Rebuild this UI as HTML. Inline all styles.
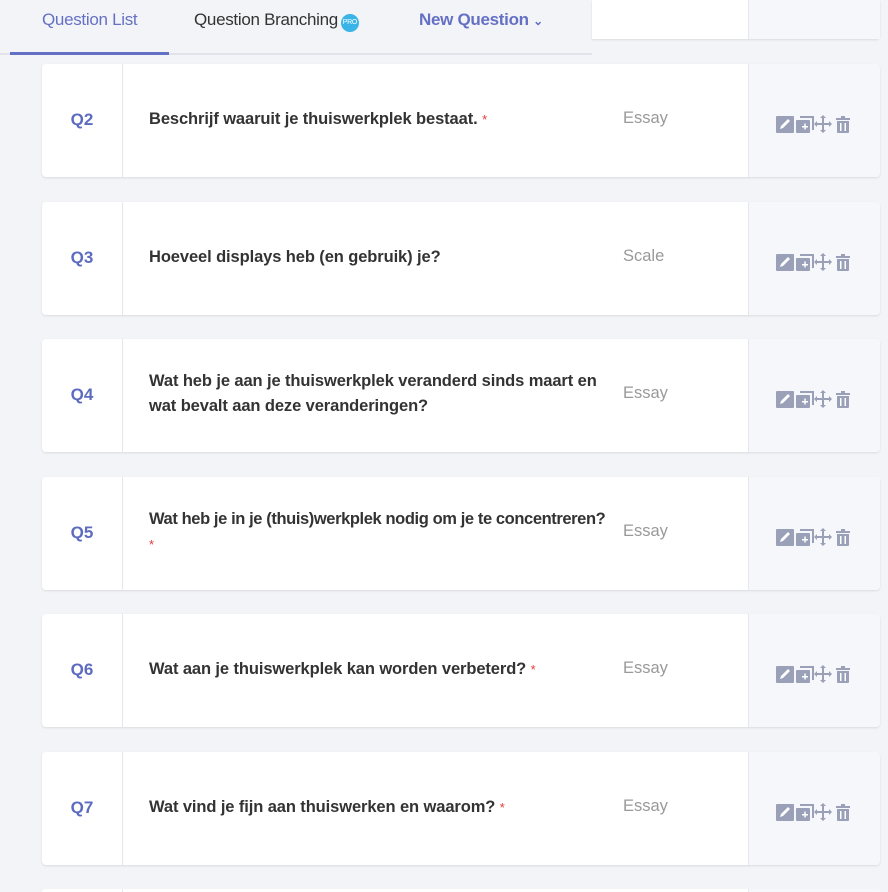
<!DOCTYPE html>
<html><head><meta charset="utf-8"><style>
*{margin:0;padding:0;box-sizing:border-box}
html,body{width:888px;height:892px;overflow:hidden}
body{background:#f3f4f8;font-family:"Liberation Sans",sans-serif;position:relative}
.tabs{position:absolute;left:0;top:0;width:592px;height:55px;border-bottom:2px solid #e2e3ea}
.tab{position:absolute;top:10px;font-size:17px;color:#333;letter-spacing:-0.3px}
.ul{position:absolute;left:10px;top:52px;width:159px;height:3px;background:#6470c4}
.topcard{position:absolute;left:592px;top:0;width:288px;height:39px;background:#fff;border-radius:0 0 4px 0;box-shadow:0 1px 2px rgba(0,0,0,.1)}
.topcard .a{position:absolute;left:156px;top:0;bottom:0;width:132px;background:#f6f7fb;border-left:1px solid #e6e7ee}
.card{position:absolute;left:42px;width:838px;height:113px;background:#fff;border-radius:4px;box-shadow:0 1px 2px rgba(0,0,0,.1);overflow:hidden}
.q{position:absolute;left:0;top:0;width:81px;height:113px;border-right:1px solid #e6e7ee;color:#5c6bc0;font-weight:bold;font-size:17px;text-align:center;line-height:111px}
.t{position:absolute;left:107px;width:482px;font-weight:bold;font-size:16.5px;color:#333;line-height:25px;letter-spacing:-0.1px}
.s{color:#e53935;font-size:13px;font-weight:normal;vertical-align:top}
.ty{position:absolute;left:581px;top:45px;color:#999;font-size:16.5px}
.act{position:absolute;left:706px;top:0;width:132px;height:113px;background:#f6f7fb;border-left:1px solid #e6e7ee}
.act svg{position:absolute;left:26px;top:50px}
</style></head><body>
<div class="tabs">
<div class="tab" style="left:42px;color:#6470c4">Question List</div>
<div class="tab" style="left:194px">Question Branching<span style="display:inline-block;width:18px;height:18px;border-radius:50%;background:#3ab4e6;color:#fff;font-size:7px;line-height:18px;text-align:center;vertical-align:1px;margin-left:3px">PRO</span></div>
<div class="tab" style="left:419px;color:#6470c4;font-weight:bold">New Question <span style="font-size:12px">&#8964;</span></div>
<div class="ul"></div>
</div>
<div class="topcard"><div class="a"></div></div>

<div class="card" style="top:64px"><div class="q">Q2</div><div class="t" style="top:43px">Beschrijf waaruit je thuiswerkplek bestaat. <span class="s">*</span></div><div class="ty">Essay</div><div class="act"><svg width="80" height="20" viewBox="0 0 80 20" fill="#9aa0b8"><rect x="1" y="2" width="18" height="17" rx="1"/><path d="M5 15l1-3 7-7 2 2-7 7z" fill="#fff"/><rect x="21" y="6" width="14" height="13" rx="1"/><path d="M25 2h14v14h-2V4H25z"/><path d="M27 12h6v1.5h-6zM29.3 9.5h1.5v6h-1.5z" fill="#fff"/><path d="M48 1l3 3h-2v5h5V7l3 3-3 3v-2h-5v5h2l-3 3-3-3h2v-5h-5v2l-3-3 3-3v2h5V4h-2z"/><path d="M61 4h5V2h4v2h5v2H61z"/><path d="M62 7h12v11a1 1 0 01-1 1H63a1 1 0 01-1-1z"/><path d="M65 9h1.5v8H65zM69.5 9H71v8h-1.5z" fill="#fff"/></svg></div></div>

<div class="card" style="top:202px"><div class="q">Q3</div><div class="t" style="top:43px">Hoeveel displays heb (en gebruik) je?</div><div class="ty">Scale</div><div class="act"><svg width="80" height="20" viewBox="0 0 80 20" fill="#9aa0b8"><rect x="1" y="2" width="18" height="17" rx="1"/><path d="M5 15l1-3 7-7 2 2-7 7z" fill="#fff"/><rect x="21" y="6" width="14" height="13" rx="1"/><path d="M25 2h14v14h-2V4H25z"/><path d="M27 12h6v1.5h-6zM29.3 9.5h1.5v6h-1.5z" fill="#fff"/><path d="M48 1l3 3h-2v5h5V7l3 3-3 3v-2h-5v5h2l-3 3-3-3h2v-5h-5v2l-3-3 3-3v2h5V4h-2z"/><path d="M61 4h5V2h4v2h5v2H61z"/><path d="M62 7h12v11a1 1 0 01-1 1H63a1 1 0 01-1-1z"/><path d="M65 9h1.5v8H65zM69.5 9H71v8h-1.5z" fill="#fff"/></svg></div></div>

<div class="card" style="top:339px"><div class="q">Q4</div><div class="t" style="top:30px;width:460px">Wat heb je aan je thuiswerkplek veranderd sinds maart en wat bevalt aan deze veranderingen?</div><div class="ty">Essay</div><div class="act"><svg width="80" height="20" viewBox="0 0 80 20" fill="#9aa0b8"><rect x="1" y="2" width="18" height="17" rx="1"/><path d="M5 15l1-3 7-7 2 2-7 7z" fill="#fff"/><rect x="21" y="6" width="14" height="13" rx="1"/><path d="M25 2h14v14h-2V4H25z"/><path d="M27 12h6v1.5h-6zM29.3 9.5h1.5v6h-1.5z" fill="#fff"/><path d="M48 1l3 3h-2v5h5V7l3 3-3 3v-2h-5v5h2l-3 3-3-3h2v-5h-5v2l-3-3 3-3v2h5V4h-2z"/><path d="M61 4h5V2h4v2h5v2H61z"/><path d="M62 7h12v11a1 1 0 01-1 1H63a1 1 0 01-1-1z"/><path d="M65 9h1.5v8H65zM69.5 9H71v8h-1.5z" fill="#fff"/></svg></div></div>

<div class="card" style="top:477px"><div class="q">Q5</div><div class="t" style="top:30px;width:500px;letter-spacing:-0.4px">Wat heb je in je (thuis)werkplek nodig om je te concentreren?<br><span class="s">*</span></div><div class="ty">Essay</div><div class="act"><svg width="80" height="20" viewBox="0 0 80 20" fill="#9aa0b8"><rect x="1" y="2" width="18" height="17" rx="1"/><path d="M5 15l1-3 7-7 2 2-7 7z" fill="#fff"/><rect x="21" y="6" width="14" height="13" rx="1"/><path d="M25 2h14v14h-2V4H25z"/><path d="M27 12h6v1.5h-6zM29.3 9.5h1.5v6h-1.5z" fill="#fff"/><path d="M48 1l3 3h-2v5h5V7l3 3-3 3v-2h-5v5h2l-3 3-3-3h2v-5h-5v2l-3-3 3-3v2h5V4h-2z"/><path d="M61 4h5V2h4v2h5v2H61z"/><path d="M62 7h12v11a1 1 0 01-1 1H63a1 1 0 01-1-1z"/><path d="M65 9h1.5v8H65zM69.5 9H71v8h-1.5z" fill="#fff"/></svg></div></div>

<div class="card" style="top:614px"><div class="q">Q6</div><div class="t" style="top:43px">Wat aan je thuiswerkplek kan worden verbeterd? <span class="s">*</span></div><div class="ty">Essay</div><div class="act"><svg width="80" height="20" viewBox="0 0 80 20" fill="#9aa0b8"><rect x="1" y="2" width="18" height="17" rx="1"/><path d="M5 15l1-3 7-7 2 2-7 7z" fill="#fff"/><rect x="21" y="6" width="14" height="13" rx="1"/><path d="M25 2h14v14h-2V4H25z"/><path d="M27 12h6v1.5h-6zM29.3 9.5h1.5v6h-1.5z" fill="#fff"/><path d="M48 1l3 3h-2v5h5V7l3 3-3 3v-2h-5v5h2l-3 3-3-3h2v-5h-5v2l-3-3 3-3v2h5V4h-2z"/><path d="M61 4h5V2h4v2h5v2H61z"/><path d="M62 7h12v11a1 1 0 01-1 1H63a1 1 0 01-1-1z"/><path d="M65 9h1.5v8H65zM69.5 9H71v8h-1.5z" fill="#fff"/></svg></div></div>

<div class="card" style="top:752px"><div class="q">Q7</div><div class="t" style="top:43px">Wat vind je fijn aan thuiswerken en waarom? <span class="s">*</span></div><div class="ty">Essay</div><div class="act"><svg width="80" height="20" viewBox="0 0 80 20" fill="#9aa0b8"><rect x="1" y="2" width="18" height="17" rx="1"/><path d="M5 15l1-3 7-7 2 2-7 7z" fill="#fff"/><rect x="21" y="6" width="14" height="13" rx="1"/><path d="M25 2h14v14h-2V4H25z"/><path d="M27 12h6v1.5h-6zM29.3 9.5h1.5v6h-1.5z" fill="#fff"/><path d="M48 1l3 3h-2v5h5V7l3 3-3 3v-2h-5v5h2l-3 3-3-3h2v-5h-5v2l-3-3 3-3v2h5V4h-2z"/><path d="M61 4h5V2h4v2h5v2H61z"/><path d="M62 7h12v11a1 1 0 01-1 1H63a1 1 0 01-1-1z"/><path d="M65 9h1.5v8H65zM69.5 9H71v8h-1.5z" fill="#fff"/></svg></div></div>

<div class="card" style="top:889px;height:3px;border-radius:4px 4px 0 0;box-shadow:none"><div class="q" style="height:3px"></div><div class="act" style="height:3px"></div></div>
</body></html>
